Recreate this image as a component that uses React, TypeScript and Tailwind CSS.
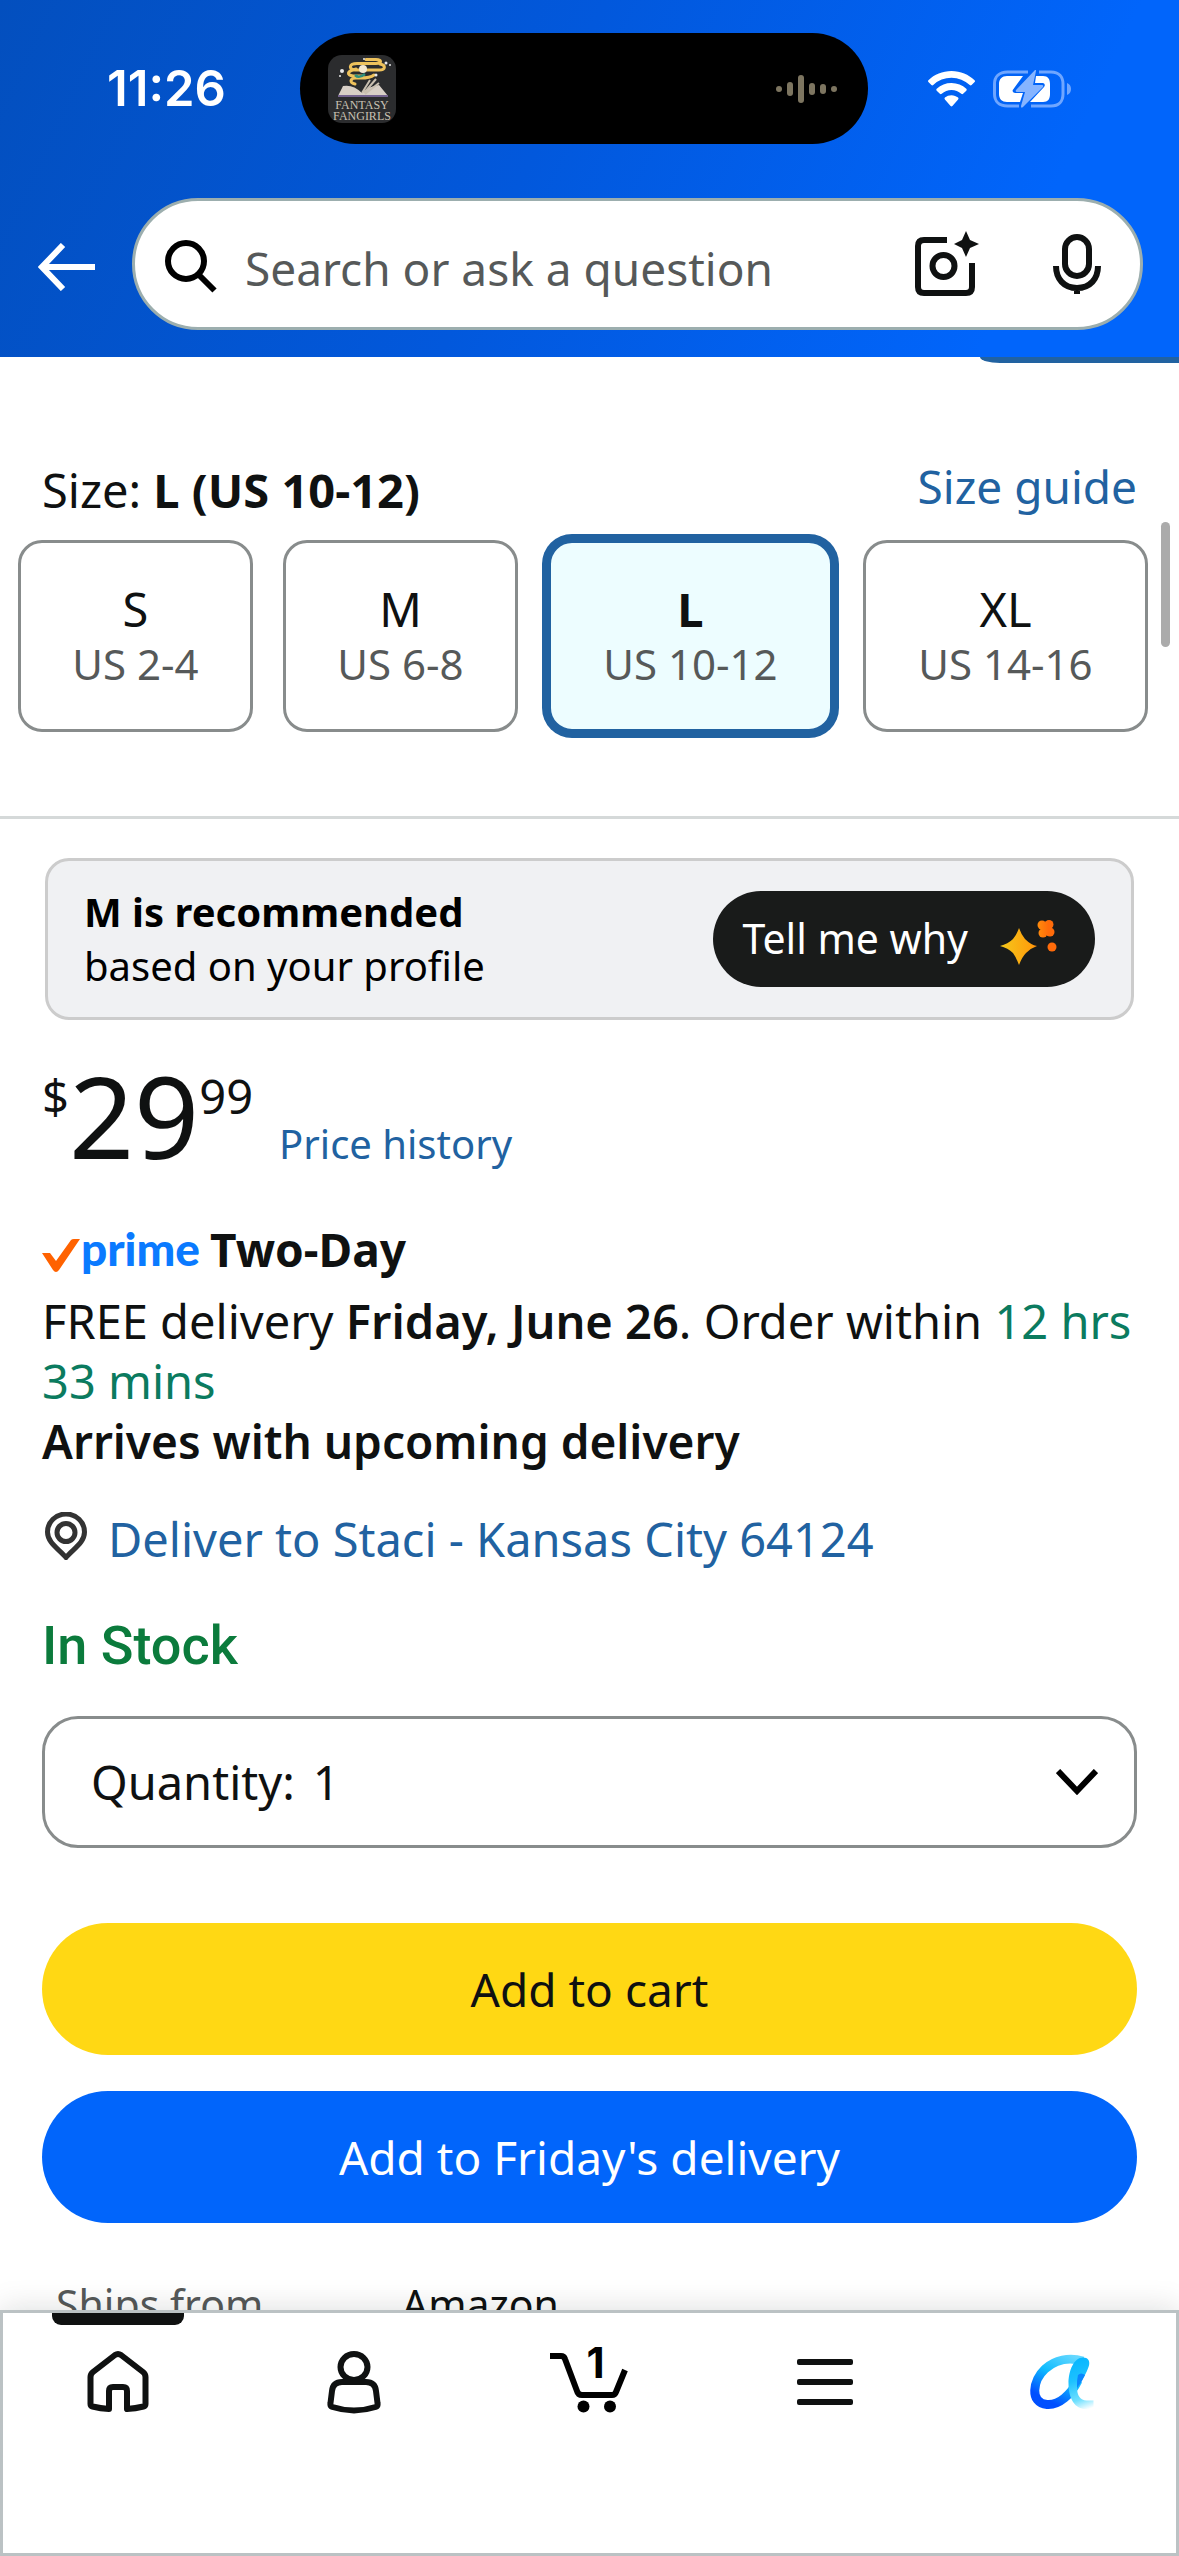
import { useState } from "react";

const sizes = [
  { name: "S", fit: "US 2-4" },
  { name: "M", fit: "US 6-8" },
  { name: "L", fit: "US 10-12" },
  { name: "XL", fit: "US 14-16" },
];

function PodcastArt() {
  return (
    <svg width="68" height="68" viewBox="328 55 68 68" aria-hidden="true">
      <rect x="328" y="55" width="68" height="68" rx="14" fill="#2b2c2e" />
      <g fill="none" stroke="#eec25c" strokeWidth="3" strokeLinecap="round">
        <path d="M366 59.500h10c6 0 6 4 0 4h-19c-8 0-9 6-2 6.500h24c7 0 7-5 1-6" />
        <path d="M356 69c-9 2-10 6-3 7h10" />
        <path d="M374 75c-5 4-12 3-18 3-6 0-7 5-1 6" />
      </g>
      <circle cx="363" cy="69" r="4" fill="#f4e8d0" />
      <path d="M355 75q4 4 10-1" fill="none" stroke="#2f8f7c" strokeWidth="2.500" />
      <path d="M338 96l5-10q10-2 19 7 7-7 17-8l9 11z" fill="#d8cfc6" />
      <path d="M362 93l8-13M364 93l12-14M365 94l14-11" stroke="#c9bfb0" strokeWidth="2" />
      <path d="M338 96h50" stroke="#75648f" strokeWidth="2" />
      <g fill="#e8e8e8">
        <circle cx="342" cy="71" r="2" />
        <circle cx="340" cy="76" r="1" />
        <circle cx="364" cy="59" r="1" />
        <circle cx="386" cy="63" r="1.500" />
        <circle cx="390" cy="65" r="1" />
        <circle cx="376" cy="75" r="1.500" />
      </g>
      <text x="362" y="109" textAnchor="middle" fontFamily="Liberation Serif, serif" fontSize="12" fill="#c9c2b4">FANTASY</text>
      <text x="362" y="120" textAnchor="middle" fontFamily="Liberation Serif, serif" fontSize="12" fill="#c9c2b4">FANGIRLS</text>
    </svg>
  );
}

function StatusBar() {
  return (
    <div className="grid grid-cols-[300px_1fr_311px] items-center">
      <span className="pl-[107px] font-[Inter,sans-serif] text-[49px] leading-[60px] font-semibold">11:26</span>
      <div className="flex h-[111px] items-center justify-between rounded-full bg-black pr-[30px] pl-7">
        <PodcastArt />
        <svg width="62" height="32" viewBox="0 0 62 32" fill="#7d7560" aria-hidden="true">
          <rect x="0" y="13" width="6" height="6" rx="3" />
          <rect x="11" y="9" width="6" height="14" rx="3" />
          <rect x="22" y="2" width="6" height="28" rx="3" />
          <rect x="33" y="10" width="6" height="12" rx="3" />
          <rect x="44" y="11" width="6" height="10" rx="3" />
          <rect x="55" y="13" width="6" height="6" rx="3" />
        </svg>
      </div>
      <div className="flex items-center gap-[18px] pl-[60px]">
        <svg width="47" height="36" viewBox="0 0 47 36" fill="white" aria-hidden="true">
          <path d="M23.500 0C32.500 0 40.700 3.500 46.600 9.300q.8.900 0 1.800l-3 3q-.9.800-1.800 0A26.500 26.500 0 0 0 5.200 14q-.9.800-1.800 0l-3-3q-.8-.9 0-1.800C6.300 3.500 14.500 0 23.500 0z" />
          <path d="M23.500 12c5.700 0 10.900 2.200 14.800 5.800q1 .9 0 1.900l-3.200 3.100q-.9.800-1.800 0a14.500 14.500 0 0 0-19.600 0q-.9.800-1.800 0l-3.200-3.100q-1-1 0-1.900A21.700 21.700 0 0 1 23.500 12z" />
          <path d="M23.500 24.200c2.500 0 4.800.9 6.600 2.400q.9.900 0 1.800l-5.700 6.700q-.9.900-1.800 0l-5.700-6.700q-.9-.9 0-1.800 2.800-2.400 6.600-2.400z" />
        </svg>
        <svg width="79" height="38" viewBox="0 0 79 38" aria-hidden="true">
          <path d="M35 2H14.500C6 2 1.500 7 1.500 14v10c0 7 4.500 12 13 12H26M46 2h12c8 0 12 5 12 12v10c0 7-4 12-12 12H38" fill="none" stroke="#6fa6ff" strokeWidth="3" />
          <path d="M30 6H14c-5 0-8 3-8 8v10c0 5 3 8 8 8h13l3-9H22q-4-1-1.500-4zM43 6h7c5 0 7 3 7 8v10c0 5-2 8-7 8H37l14-15q2-3-1-4h-8z" fill="white" />
          <path d="M42 0L23 20q-1 2 1 2h8l-4 14q0 3 2 1l20-20q1-2-1-2h-9l3-14q0-2-1-1z" fill="#86b4ff" />
          <path d="M74 13q4 1.500 4 6t-4 6z" fill="#6fa6ff" />
        </svg>
      </div>
    </div>
  );
}

function SearchBar() {
  return (
    <div className="mt-[54px] flex items-center pr-9 pl-[38px]">
      <button type="button" aria-label="Back" className="mt-1.5 mr-[37px]">
        <svg width="57" height="48" viewBox="0 0 57 48" fill="none" stroke="white" strokeWidth="6" aria-hidden="true">
          <path d="M57 24H5M25 2L4 24l21 22" />
        </svg>
      </button>
      <form role="search" className="flex h-[132px] min-w-0 flex-1 items-center rounded-full border-3 border-[#9caeae] bg-white pr-[39px] pl-[30px] text-[#0f1111]">
        <svg width="52" height="54" viewBox="0 0 52 54" fill="none" stroke="black" strokeWidth="6" className="mt-1 shrink-0" aria-hidden="true">
          <circle cx="21" cy="22" r="18" />
          <path d="M33.500 35.500l16 16" />
        </svg>
        <input
          type="text"
          aria-label="Search"
          placeholder="Search or ask a question"
          className="ml-7 min-w-0 flex-1 pt-2 text-[46px] outline-none placeholder:text-[#565959]"
        />
        <button type="button" aria-label="Search with camera">
          <svg width="64" height="66" viewBox="0 0 64 66" fill="none" stroke="#0f1111" strokeWidth="6" aria-hidden="true">
            <path d="M32 9H9q-6 0-6 6v41q0 6 6 6h42q6 0 6-6V32" />
            <circle cx="28.500" cy="35" r="11" />
            <path d="M51 0l4 9 9 4-9 4-4 9-4-9-8-4 8-4z" fill="#0f1111" stroke="none" />
          </svg>
        </button>
        <button type="button" aria-label="Search by voice" className="ml-[74px]">
          <svg width="48" height="60" viewBox="0 0 48 60" fill="none" stroke="#0f1111" strokeWidth="6" aria-hidden="true">
            <rect x="12" y="3" width="24" height="39" rx="12" />
            <path d="M3 32c0 13 8 22 21 22s21-9 21-22M24 54v6" />
          </svg>
        </button>
      </form>
    </div>
  );
}

function SizePicker() {
  const [selected, setSelected] = useState("L");
  const current = sizes.find((s) => s.name === selected)!;

  return (
    <section className="border-b-3 border-[#d5d9d9] pt-[97px] pb-[84px]">
      <div className="flex items-start justify-between px-[42px]">
        <p className="text-[47px] leading-[60px]">
          Size: <strong>{current.name} ({current.fit})</strong>
        </p>
        <a href="#size-guide" className="text-[46px] leading-[52px] text-[#2162a1]">Size guide</a>
      </div>
      <div className="mt-5 grid grid-cols-[235fr_235fr_285fr_285fr] gap-[30px] pr-[31px] pl-[18px]">
        {sizes.map((size) => (
          <button
            key={size.name}
            type="button"
            aria-pressed={size.name === selected}
            onClick={() => setSelected(size.name)}
            className={`flex h-48 flex-col items-center justify-center rounded-3xl border-3 ${
              size.name === selected
                ? "border-[#2162a1] bg-[#edfdff] font-bold ring-6 ring-[#2162a1]"
                : "border-[#888c8c] bg-white"
            }`}
          >
            <span className="text-[47px] leading-[56px]">{size.name}</span>
            <span className="text-[42px] leading-[54px] font-normal text-[#565959]">{size.fit}</span>
          </button>
        ))}
      </div>
    </section>
  );
}

function Recommendation() {
  return (
    <section className="mx-[45px] mt-[39px] flex h-[162px] items-center justify-between rounded-3xl border-3 border-[#cccccc] bg-[#f0f1f3] pr-9 pl-9 text-black">
      <p className="text-[40px] leading-[54px]">
        <strong>M is recommended</strong>
        <br />
        based on your profile
      </p>
      <button type="button" className="flex h-24 items-center gap-8 rounded-full bg-[#191b1a] pr-[38px] pl-[30px] text-white">
        <span className="text-[41px]">Tell me why</span>
        <svg width="57" height="46" viewBox="0 0 57 46" className="mt-2" aria-hidden="true">
          <defs>
            <linearGradient id="spark" gradientUnits="userSpaceOnUse" x1="0" y1="0" x2="57" y2="0">
              <stop offset="0" stopColor="#f4c81c" />
              <stop offset="0.550" stopColor="#ff9e0c" />
              <stop offset="0.850" stopColor="#ff6b0a" />
            </linearGradient>
          </defs>
          <g fill="url(#spark)">
            <path d="M19 8q2 6 6 11 6 6 12 7-6 2-11 7-4 4-7 12-3-8-6-12-5-5-13-7 8-2 13-7 4-5 6-11z" />
            <circle cx="42" cy="5" r="4.500" />
            <circle cx="49" cy="4.500" r="4.500" />
            <circle cx="50" cy="12" r="4.500" />
            <circle cx="43" cy="13" r="4.500" />
            <rect x="41" y="4" width="9" height="9" />
            <circle cx="52" cy="27" r="4.500" />
          </g>
        </svg>
      </button>
    </section>
  );
}

function BuyBox() {
  const [quantity, setQuantity] = useState("1");

  return (
    <section className="px-[42px] pt-[37px]">
      <div className="flex items-start">
        <span className="pt-4 text-[47px] leading-[46px]">$</span>
        <span className="text-[114px] leading-[116px]">29</span>
        <span className="pt-4 text-[47px] leading-[46px]">99</span>
        <a href="#price-history" className="ml-[26px] self-end pb-0.5 text-[40px] leading-[54px] text-[#2162a1]">Price history</a>
      </div>

      <div className="mt-[46px] flex items-center text-[46px] leading-[60px] font-bold">
        <svg width="38" height="33" viewBox="0 0 38 33" className="mt-3" aria-hidden="true">
          <path d="M0 14h8l6 8L29 1q1-1 3-1h6L17 31q-3 4-6 0z" fill="#ff6200" />
        </svg>
        <span className="ml-px font-[Lato,sans-serif] font-black text-[#0a7aff]">prime</span>
        <span className="ml-2.5">Two-Day</span>
      </div>

      <div className="mt-3 text-[47px] leading-[60px]">
        <p>
          FREE delivery <strong className="font-semibold">Friday, June 26</strong>. Order within{" "}
          <span className="text-[#0b7b5f]">12 hrs 33 mins</span>
        </p>
        <p className="text-[46px] font-semibold">Arrives with upcoming delivery</p>
      </div>

      <a href="#address" className="mt-[38px] flex items-center text-[47px] leading-[60px] text-[#2162a1]">
        <svg width="48" height="48" viewBox="0 0 48 48" fill="none" stroke="#333" strokeWidth="5" className="-mt-1.5" aria-hidden="true">
          <path d="M24 45.500C17 37 5.500 31 5.500 20a18.500 18 0 0 1 37 0C42.500 31 31 37 24 45.500z" />
          <circle cx="24" cy="20.500" r="9" />
        </svg>
        <span className="ml-[18px]">Deliver to Staci - Kansas City 64124</span>
      </a>

      <p className="mt-[47px] font-[Roboto,sans-serif] text-[54px] leading-[60px] font-medium text-[#0b7b3c]">In Stock</p>

      <div className="mt-[40px] flex h-[132px] items-center rounded-[36px] border-3 border-[#888c8c] pr-9 pl-[46px] text-[47px]">
        <label htmlFor="quantity">Quantity:</label>
        <select
          id="quantity"
          value={quantity}
          onChange={(e) => setQuantity(e.target.value)}
          className="ml-[18px] flex-1 appearance-none outline-none"
        >
          <option>1</option>
          <option>2</option>
          <option>3</option>
        </select>
        <svg width="42" height="27" viewBox="0 0 42 27" fill="none" stroke="black" strokeWidth="6" aria-hidden="true">
          <path d="M2 2l19 20L40 2" />
        </svg>
      </div>

      <button type="button" className="mt-[75px] h-[132px] w-full rounded-full bg-[#ffd814] text-[46px]">
        Add to cart
      </button>
      <button type="button" className="mt-9 h-[132px] w-full rounded-full bg-[#0165fb] text-[46px] text-white">
        Add to Friday's delivery
      </button>

      <dl className="mt-[54px] grid grid-cols-[346px_1fr] pl-[14px] text-[41px] leading-[54px]">
        <dt className="text-[#565959]">Ships from</dt>
        <dd>Amazon</dd>
      </dl>
    </section>
  );
}

function TabBar() {
  return (
    <nav className="relative grid h-[246px] shrink-0 grid-cols-5 items-start justify-items-center bg-white pt-[37px] shadow-[0_0_30px_rgba(15,17,17,0.150)] outline-3 -outline-offset-3 outline-[#bbc2c4]">
      <span className="absolute top-[3px] left-[52px] h-3 w-33 rounded-b-[9px] bg-[#0f1111]" />
      <a href="#home" aria-label="Home">
        <svg width="70" height="70" viewBox="83 2347 70 70" fill="none" stroke="#0f1111" strokeWidth="6" strokeLinejoin="round" aria-hidden="true">
          <path d="M115 2355q3-2 6 0l22 17q2.500 2 2.500 5v27q0 2-2 2.500-8 2-16.500 2.500v-18q0-4-4-4h-10q-4 0-4 4v18q-8.500-.5-16.500-2.500-2-.5-2-2.500v-27q0-3 2.500-5z" />
        </svg>
      </a>
      <a href="#account" aria-label="Account">
        <svg width="70" height="70" viewBox="318.500 2347 70 70" fill="none" stroke="#0f1111" strokeWidth="6" strokeLinejoin="round" aria-hidden="true">
          <ellipse cx="353.500" cy="2367" rx="13.500" ry="13" />
          <path d="M341.500 2382h24q9 0 10 9l1.500 12q.5 3-2 4-21.500 7-43 0-2.500-1-2-4l1.500-12q1-9 10-9z" />
        </svg>
      </a>
      <a href="#cart" aria-label="Cart" className="relative">
        <svg width="78" height="70" viewBox="551 2347 78 70" fill="none" stroke="black" strokeWidth="6" strokeLinejoin="round" aria-hidden="true">
          <path d="M551 2356h11q3 0 4 3l12 32q1 4 5 4h30q3 0 4-3l9-22" />
          <circle cx="584.500" cy="2406.500" r="6" fill="black" stroke="none" />
          <circle cx="611" cy="2406.500" r="6" fill="black" stroke="none" />
        </svg>
        <span className="absolute -top-1 left-9 font-[Inter,sans-serif] text-[42px] leading-10 font-bold text-black">1</span>
      </a>
      <a href="#menu" aria-label="Menu">
        <svg width="56" height="70" viewBox="0 0 56 70" fill="#0f1111" aria-hidden="true">
          <rect y="12" width="56" height="6" rx="2" />
          <rect y="32" width="56" height="6" rx="2" />
          <rect y="52" width="56" height="6" rx="2" />
        </svg>
      </a>
      <a href="#assistant" aria-label="Assistant">
        <svg width="70" height="70" viewBox="1027 2347 70 70" aria-hidden="true">
          <defs>
            <linearGradient id="bowl" gradientUnits="userSpaceOnUse" x1="1075" y1="2356" x2="1048" y2="2406">
              <stop offset="0" stopColor="#66d8ff" />
              <stop offset="0.450" stopColor="#0fbcff" />
              <stop offset="0.900" stopColor="#004fff" />
            </linearGradient>
            <linearGradient id="stem" gradientUnits="userSpaceOnUse" x1="1078" y1="2362" x2="1095" y2="2407">
              <stop offset="0" stopColor="#0bb8ff" />
              <stop offset="0.350" stopColor="#1ec2ff" />
              <stop offset="0.750" stopColor="#6fe0ff" />
              <stop offset="1" stopColor="#ffffff" />
            </linearGradient>
          </defs>
          <path d="M1084 2361c-14-4-28-1-38 8-12 11-16 34 2 35.500 12 1 24-10 31-24" fill="none" stroke="url(#bowl)" strokeWidth="9" />
          <path d="M1084 2357.500c-9 0-14.500 13-14.500 26 0 16 7 25.500 17 25.500h8v-8.500h-7c-6 0-9.500-5-9.500-13 4-5 10-15 12-22 1-5-1-8-6-8z" fill="url(#stem)" />
          <path d="M1079 2375q3-3 7 0-3 7-8 13-.5-7 1-13z" fill="#0a86ff" />
        </svg>
      </a>
    </nav>
  );
}

export default function App() {
  return (
    <div className="flex h-screen flex-col bg-white font-['Noto_Sans',sans-serif] text-[#0f1111]">
      <header className="shrink-0 bg-[linear-gradient(115deg,#034fbe,#0258dc_45%,#0165fb_85%)] pt-[33px] pb-[27px] text-white">
        <StatusBar />
        <SearchBar />
      </header>
      <main className="relative min-h-0 flex-1 overflow-hidden">
        <div className="ml-auto h-1.5 w-[199px] rounded-bl-[20px_6px] bg-[#2162a1]" />
        <SizePicker />
        <Recommendation />
        <BuyBox />
        {/* scroll thumb */}
        <div className="absolute top-[165px] right-[9px] h-[125px] w-[9px] rounded-full bg-[#ababab]" />
      </main>
      <TabBar />
    </div>
  );
}
